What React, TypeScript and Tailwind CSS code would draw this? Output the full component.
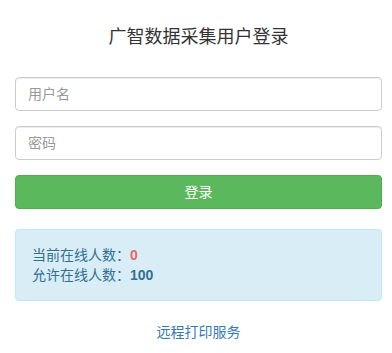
export default function App() {
  return (
    <div className="h-[353px] overflow-hidden bg-white pr-[10px] pl-[15px] font-['Liberation_Sans','Noto_Sans_CJK_SC',sans-serif] text-[14px] text-[#333]">
      <h1 className="pt-[26px] text-center text-[18px] leading-[22px] font-normal text-[#333]">广智数据采集用户登录</h1>
      <form className="mt-[29px] flex flex-col gap-[15px]" onSubmit={(e) => e.preventDefault()}>
        <input
          className="h-[34px] w-full rounded-[4px] border border-[#ccc] px-[12px] text-[14px] text-[#555] shadow-[inset_0_1px_1px_rgba(0,0,0,0.075)] outline-none placeholder:text-[#999]"
          placeholder="用户名"
        />
        <input
          type="password"
          className="h-[34px] w-full rounded-[4px] border border-[#ccc] px-[12px] text-[14px] text-[#555] shadow-[inset_0_1px_1px_rgba(0,0,0,0.075)] outline-none placeholder:text-[#999]"
          placeholder="密码"
        />
        <button className="h-[34px] w-full rounded-[4px] border border-[#4cae4c] bg-[#5cb85c] text-[14px] text-white">登录</button>
      </form>
      <div className="mt-[20px] rounded-[4px] border border-[#bce8f1] bg-[#d9edf7] px-[16px] py-[15px] leading-[20px] text-[#31708f]">
        <div>
          当前在线人数：<b className="text-[#e8666a]">0</b>
        </div>
        <div>
          允许在线人数：<b className="text-[#31708f]">100</b>
        </div>
      </div>
      <div className="mt-[21px] text-center leading-[20px]">
        <a href="#" className="text-[#337ab7]">远程打印服务</a>
      </div>
    </div>
  );
}
